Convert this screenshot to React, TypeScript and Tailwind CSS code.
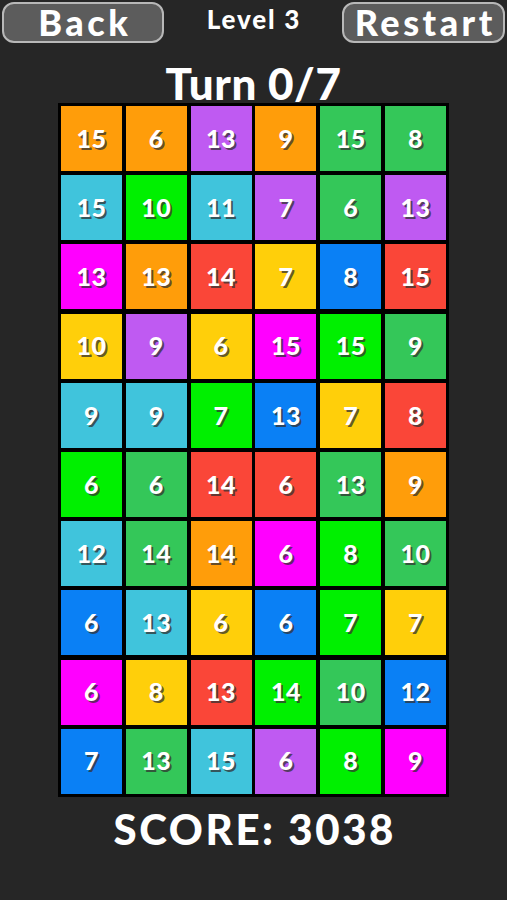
const COLORS: Record<string, string> = {
  O: 'bg-[#ff9d0a]',
  P: 'bg-[#bf5af2]',
  G: 'bg-[#34c759]',
  L: 'bg-[#00f000]',
  C: 'bg-[#40c4dc]',
  M: 'bg-[#ff00ff]',
  R: 'bg-[#fa4638]',
  Y: 'bg-[#ffcf0a]',
  B: 'bg-[#0a80f5]',
};

const BOARD: [number, string][][] = [
  [[15, 'O'], [6, 'O'], [13, 'P'], [9, 'O'], [15, 'G'], [8, 'G']],
  [[15, 'C'], [10, 'L'], [11, 'C'], [7, 'P'], [6, 'G'], [13, 'P']],
  [[13, 'M'], [13, 'O'], [14, 'R'], [7, 'Y'], [8, 'B'], [15, 'R']],
  [[10, 'Y'], [9, 'P'], [6, 'Y'], [15, 'M'], [15, 'L'], [9, 'G']],
  [[9, 'C'], [9, 'C'], [7, 'L'], [13, 'B'], [7, 'Y'], [8, 'R']],
  [[6, 'L'], [6, 'G'], [14, 'R'], [6, 'R'], [13, 'G'], [9, 'O']],
  [[12, 'C'], [14, 'G'], [14, 'O'], [6, 'M'], [8, 'L'], [10, 'G']],
  [[6, 'B'], [13, 'C'], [6, 'Y'], [6, 'B'], [7, 'L'], [7, 'Y']],
  [[6, 'M'], [8, 'Y'], [13, 'R'], [14, 'L'], [10, 'G'], [12, 'B']],
  [[7, 'B'], [13, 'G'], [15, 'C'], [6, 'P'], [8, 'L'], [9, 'M']],
];

function NavButton({ label, className }: { label: string; className: string }) {
  return (
    <button
      className={`h-[41px] rounded-[12px] border-2 border-[#b8b8b8] bg-[#5c5c5c] text-[36px] leading-none font-black text-white tracking-[3.5px] pl-[3.5px] flex items-center justify-center ${className}`}
    >
      <span className="mt-[-2px]">{label}</span>
    </button>
  );
}

export default function App() {
  return (
    <div className="min-h-[900px] w-full bg-[#262626] font-['Lato','Liberation_Sans',sans-serif] text-white">
      <div className="flex items-start justify-between px-[2px] pt-[2px]">
        <NavButton label="Back" className="w-[162px]" />
        <div className="pt-[3px] pl-[2px] text-[26px] leading-[28px] font-black tracking-[1.8px]">Level 3</div>
        <NavButton label="Restart" className="w-[163px]" />
      </div>

      <div className="mt-[20px] text-center text-[44px] leading-[40px] font-black tracking-[0.6px]">Turn 0/7</div>

      <div className="mx-auto w-fit bg-black p-[3px]">
        <div className="grid grid-cols-6 gap-x-[3.8px] gap-y-[4.2px]">
          {BOARD.flat().map(([n, c], i) => (
            <div
              key={i}
              className={`flex h-[65px] w-[61px] items-center justify-center text-[25px] font-black tracking-[0.5px] [text-shadow:2px_2px_0_rgba(50,50,50,0.75)] ${COLORS[c]}`}
            >
              {n}
            </div>
          ))}
        </div>
      </div>

      <div className="mt-[11px] pl-[2.6px] text-center text-[42px] leading-[42px] font-black tracking-[2.6px]">SCORE: 3038</div>
    </div>
  );
}
